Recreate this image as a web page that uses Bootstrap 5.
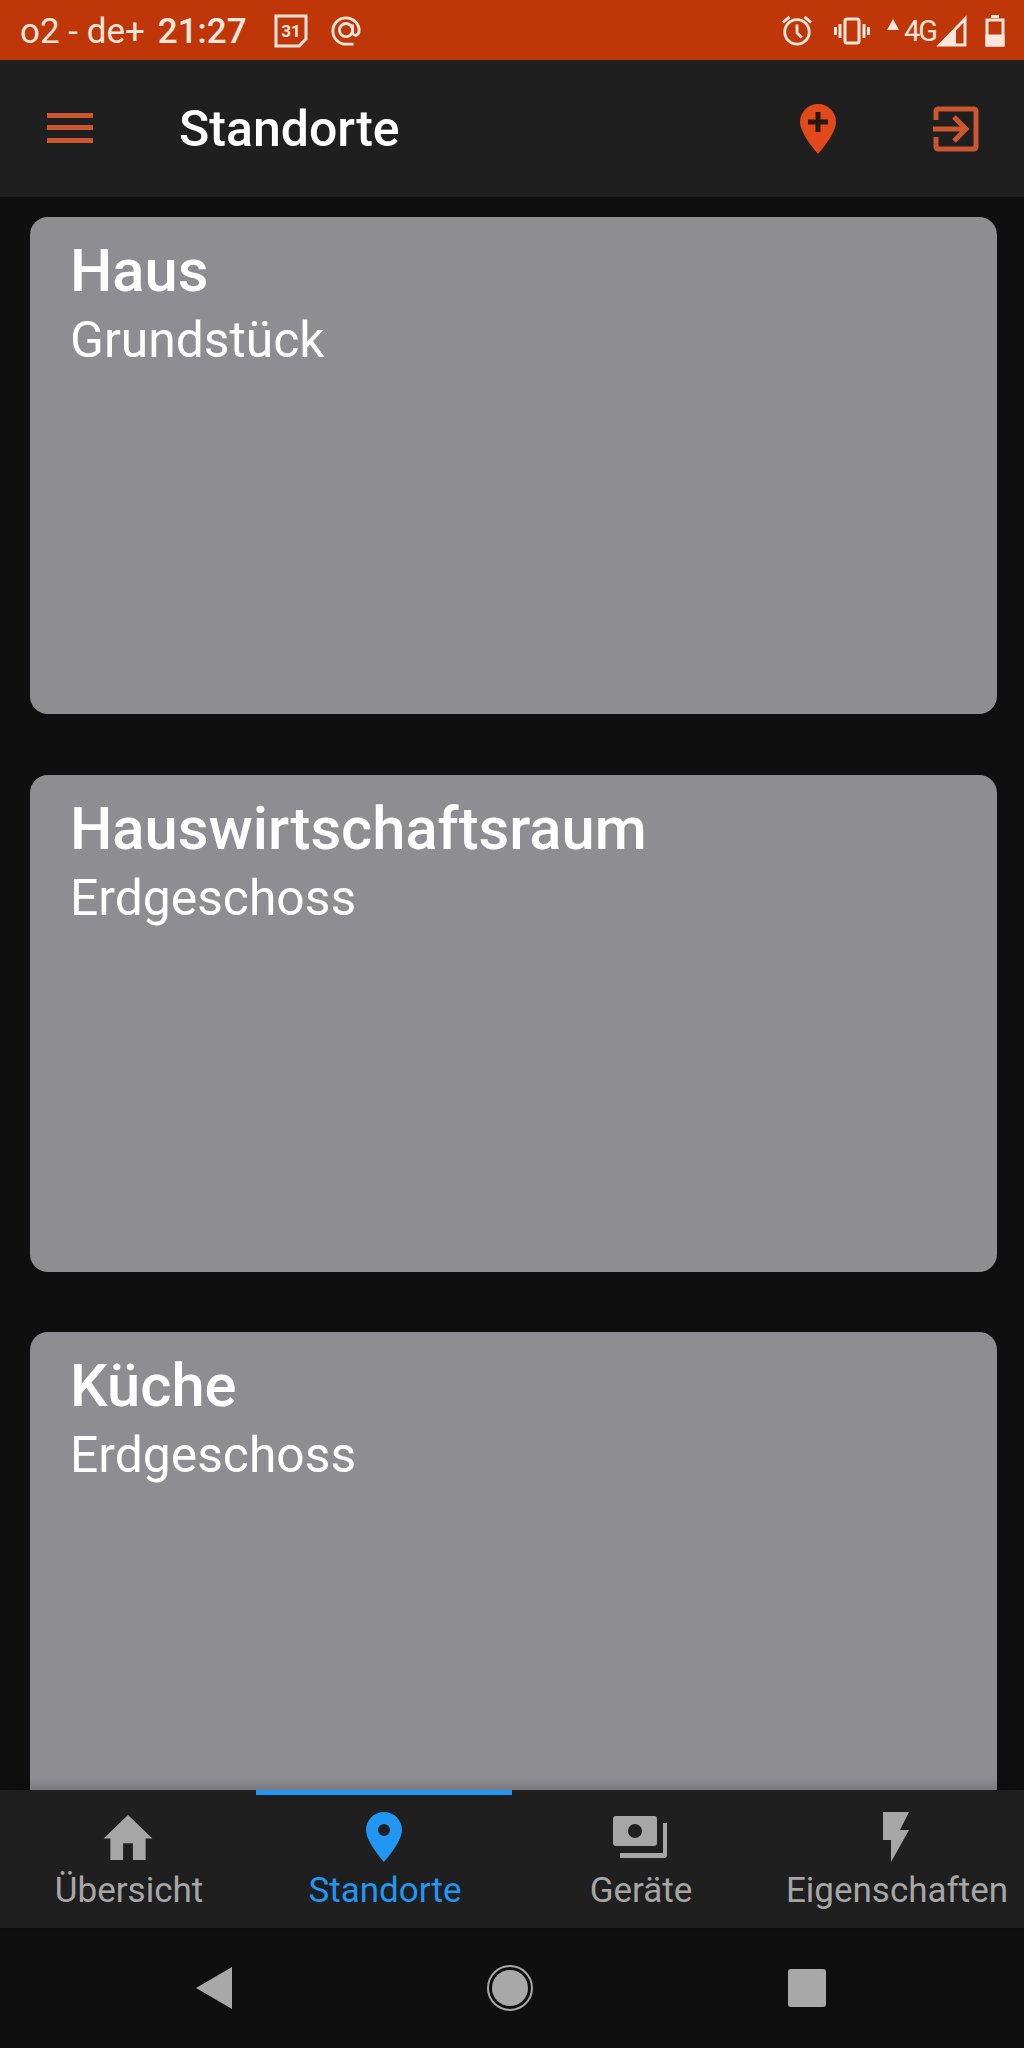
<!DOCTYPE html>
<html lang="de">

<head>
    <meta charset="UTF-8">
    <title>Standorte</title>
    <link href="https://cdn.jsdelivr.net/npm/bootstrap@5.3.0/dist/css/bootstrap.min.css" rel="stylesheet">
    <style>
        html, body { height: 2048px; overflow: hidden; }
        body { background: #0f0f10; font-family: Roboto, "Liberation Sans", sans-serif; }
        .phone-shell { height: 2048px; }

        .status-strip { height: 60px; flex: 0 0 60px; background: #bf3709; color: #fbe6dc; padding: 2px 19px 0 20px; }
        .status-text { font-size: 35px; line-height: 1; }
        .status-clock { margin-left: 13px; font-weight: 500; }
        .cal-icon { margin-left: 27px; }
        .at-icon { margin-left: 22px; }
        .vibrate-icon { margin-left: 21px; }
        .up-arrow { margin: 0 0 14px 17px; }
        .net-label { font-size: 29px; line-height: 1; margin-left: 5px; letter-spacing: -2px; }
        .batt-icon { margin-left: 18px; }

        .app-head { height: 139px; flex: 0 0 139px; background: #1f1f1f; border-bottom: 2px solid #111; padding: 0 45px 0 47px; }
        .app-title { font-size: 50px; font-weight: 500; color: #fff; line-height: 1; margin: 0 0 0 86px; }
        .head-icon { display: block; }
        .exit-icon { margin-left: 97px; }

        .place-list { padding: 18px 27px 0 30px; gap: 60.5px; min-height: 0; overflow: hidden; }
        .place-tile { height: 497px; flex: 0 0 497px; background: #8e8e92; border-radius: 18px; padding: 20px 40px; color: #fff; border: 0; }
        .place-name { font-size: 59.7px; font-weight: 500; line-height: 68px; margin: 0; }
        .place-floor { font-size: 49.8px; line-height: 70px; margin: 0; }

        .tab-strip { height: 138px; flex: 0 0 138px; background: #1f1f1f; position: relative; box-shadow: 0 -4px 10px rgba(0, 0, 0, .18); }
        .tab-cell { flex: 1 1 0; color: #a6a6a6; border-top: 5px solid transparent; font-size: 35px; line-height: 1; padding-top: 17px; }
        .tab-cell.is-current { color: #2196f3; border-top-color: #2196f3; }
        .tab-glyph { height: 50px; }
        .tab-label { margin-top: 11px; padding-left: 2px; white-space: nowrap; }

        .sys-nav { height: 120px; flex: 0 0 120px; background: #0f0f10; padding-left: 196px; padding-right: 198px; }
    </style>
</head>

<body>
    <div class="phone-shell d-flex flex-column">

        <!-- status bar -->
        <div class="status-strip d-flex align-items-center">
            <span class="status-text">o2 - de+</span>
            <span class="status-text status-clock">21:27</span>
            <svg class="cal-icon" width="34" height="34" viewBox="0 0 34 34" fill="none" stroke="#fbe6dc" stroke-width="3">
                <path d="M2 2H32V25L25 32H2Z" />
                <text x="17" y="23" text-anchor="middle" font-size="17" font-weight="700" fill="#fbe6dc" stroke="none">31</text>
            </svg>
            <svg class="at-icon" width="32" height="32" viewBox="0 0 34 34" fill="none" stroke="#fbe6dc" stroke-width="3">
                <circle cx="17" cy="16" r="7" />
                <path d="M24 10V18C24 23 31 23 31 16A14 14 0 1 0 17 31H25" />
            </svg>
            <div class="ms-auto d-flex align-items-center">
                <svg width="32" height="34" viewBox="0 0 34 34" fill="none" stroke="#fbe6dc" stroke-width="3">
                    <circle cx="17" cy="18" r="13" />
                    <path d="M17 10V19L22 24M2 8L9 2M32 8L25 2" />
                </svg>
                <svg class="vibrate-icon" width="36" height="28" viewBox="0 0 36 28" fill="none" stroke="#fbe6dc" stroke-width="3">
                    <rect x="11" y="2" width="14" height="24" rx="2" />
                    <path d="M6 7V21M1.500 10V18M30 7V21M34.500 10V18" />
                </svg>
                <svg class="up-arrow" width="12" height="11" viewBox="0 0 12 11" fill="#fbe6dc">
                    <path d="M6 0L12 11H0Z" />
                </svg>
                <span class="net-label">4G</span>
                <svg width="31" height="32" viewBox="0 0 31 32" fill="none" stroke="#fbe6dc" stroke-width="3">
                    <path d="M29 4V30H4Z" />
                    <path d="M1 31L20 12V31Z" fill="#fbe6dc" stroke="none" />
                </svg>
                <svg class="batt-icon" width="20" height="32" viewBox="0 0 20 32" fill="none" stroke="#fbe6dc" stroke-width="3">
                    <path d="M2 5H18V30H2ZM6 1.500H14" />
                    <path d="M2 21H18V30H2Z" fill="#fbe6dc" />
                </svg>
            </div>
        </div>

        <!-- app bar -->
        <div class="app-head d-flex align-items-center">
            <svg class="head-icon" width="46" height="32" viewBox="0 0 46 32" fill="#cc5630">
                <rect width="46" height="5" />
                <rect y="12" width="46" height="5" />
                <rect y="25" width="46" height="5" />
            </svg>
            <h1 class="app-title">Standorte</h1>
            <svg class="head-icon ms-auto" width="36" height="50" viewBox="0 0 36 50">
                <path d="M18 0C8 0 0 8 0 18C0 30 18 50 18 50S36 30 36 18C36 8 28 0 18 0Z" fill="#e2491a" />
                <path d="M15.500 8H20.500V15.500H28V20.500H20.500V28H15.500V20.500H8V15.500H15.500Z" fill="#26170f" />
            </svg>
            <svg class="head-icon exit-icon" width="46" height="46" viewBox="0 0 46 46" fill="none" stroke="#cc5630" stroke-width="5">
                <path d="M3 14V5A2.500 2.500 0 0 1 5 3H41A2.500 2.500 0 0 1 43 5V41A2.500 2.500 0 0 1 41 43H5A2.500 2.500 0 0 1 3 41V31" />
                <path d="M0 23H32M21 11L33 23L21 35" />
            </svg>
        </div>

        <!-- locations -->
        <div class="place-list flex-grow-1 d-flex flex-column">
            <div class="card place-tile">
                <h2 class="place-name">Haus</h2>
                <p class="place-floor">Grundstück</p>
            </div>
            <div class="card place-tile">
                <h2 class="place-name">Hauswirtschaftsraum</h2>
                <p class="place-floor">Erdgeschoss</p>
            </div>
            <div class="card place-tile">
                <h2 class="place-name">Küche</h2>
                <p class="place-floor">Erdgeschoss</p>
            </div>
        </div>

        <!-- bottom tabs -->
        <div class="tab-strip d-flex">
            <div class="tab-cell d-flex flex-column align-items-center">
                <div class="tab-glyph d-flex align-items-center">
                    <svg width="50" height="45" viewBox="0 0 50 46" fill="#a6a6a6">
                        <path d="M25 0L50 24H43V46H30V29H20V46H7V24H0Z" />
                    </svg>
                </div>
                <span class="tab-label">Übersicht</span>
            </div>
            <div class="tab-cell is-current d-flex flex-column align-items-center">
                <div class="tab-glyph d-flex align-items-center">
                    <svg width="36" height="50" viewBox="0 0 36 50">
                        <path fill-rule="evenodd" d="M18 0C8 0 0 8 0 18C0 30 18 50 18 50S36 30 36 18C36 8 28 0 18 0ZM18 12A6 6 0 1 1 18 24A6 6 0 1 1 18 12Z" fill="#2196f3" />
                    </svg>
                </div>
                <span class="tab-label">Standorte</span>
            </div>
            <div class="tab-cell d-flex flex-column align-items-center">
                <div class="tab-glyph d-flex align-items-center">
                    <svg width="54" height="42" viewBox="0 0 54 42" fill="#a6a6a6">
                        <path fill-rule="evenodd" d="M3 0H41A3 3 0 0 1 44 3V27A3 3 0 0 1 41 30H3A3 3 0 0 1 0 27V3A3 3 0 0 1 3 0ZM22 8A7 7 0 1 0 22 22A7 7 0 1 0 22 8Z" />
                        <path d="M50 7H54V39A3 3 0 0 1 51 42H7V37H50Z" />
                    </svg>
                </div>
                <span class="tab-label">Geräte</span>
            </div>
            <div class="tab-cell d-flex flex-column align-items-center">
                <div class="tab-glyph d-flex align-items-center">
                    <svg width="26" height="50" viewBox="0 0 26 50" fill="#a6a6a6">
                        <path d="M0 0H26L17 18H26L8 50V28H0Z" />
                    </svg>
                </div>
                <span class="tab-label">Eigenschaften</span>
            </div>
        </div>

        <!-- system navigation -->
        <div class="sys-nav d-flex align-items-center justify-content-between">
            <svg width="36" height="42" viewBox="0 0 36 42" fill="#a8a8a8">
                <path d="M0 21L36 0V42Z" />
            </svg>
            <svg width="46" height="46" viewBox="0 0 46 46" fill="#a8a8a8">
                <circle cx="23" cy="23" r="22" fill="none" stroke="#a8a8a8" stroke-width="2" />
                <circle cx="23" cy="23" r="18" />
            </svg>
            <svg width="38" height="38" viewBox="0 0 38 38" fill="#a8a8a8">
                <rect width="38" height="38" rx="3" />
            </svg>
        </div>
    </div>

    <script src="https://cdn.jsdelivr.net/npm/bootstrap@5.3.0/dist/js/bootstrap.bundle.min.js"></script>
</body>

</html>
